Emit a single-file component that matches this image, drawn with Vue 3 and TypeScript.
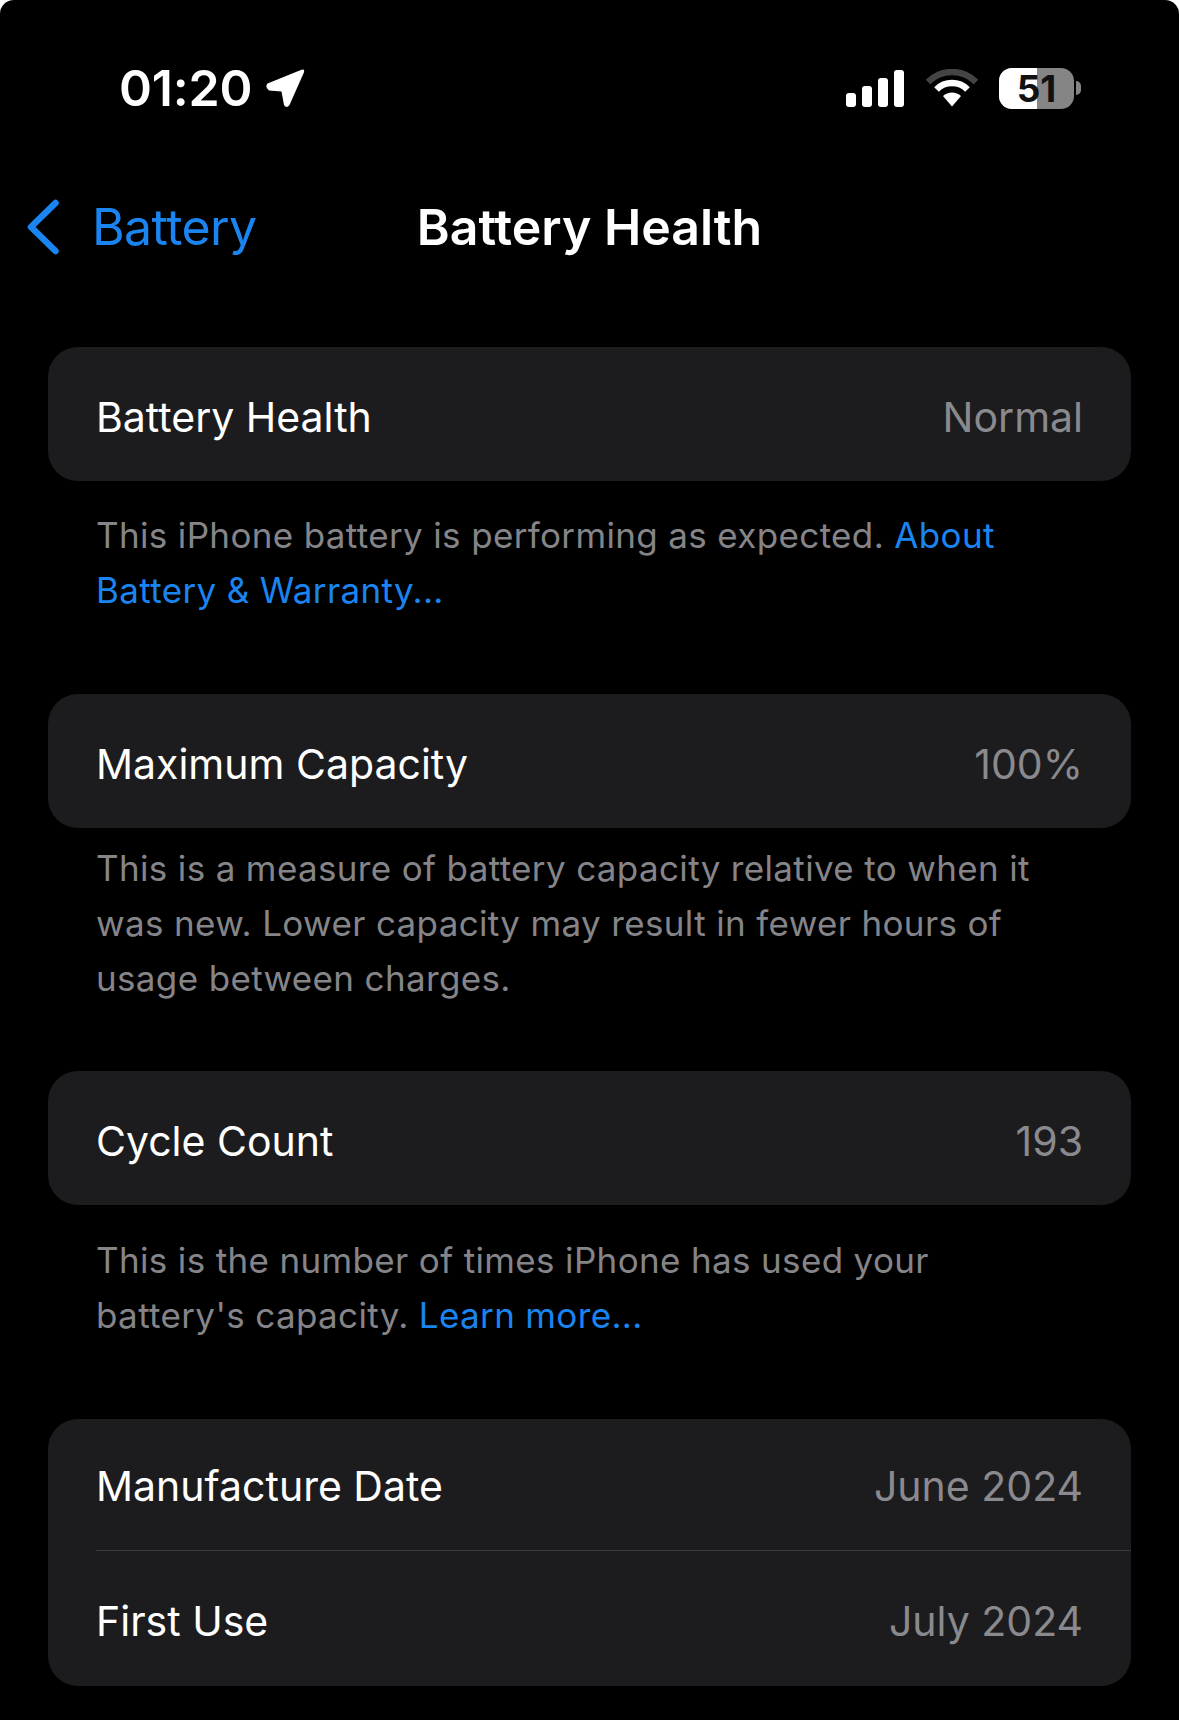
<template>
  <div class="screen">
    <!-- status bar -->
    <div class="status-bar">
      <div class="clock">
        <span class="time">01:20</span>
        <svg class="arrow" viewBox="0 0 39 39" width="39" height="39">
          <path
            d="M1.5 14.5 L35.5 0.8 Q38.8 -0.2 38 3.2 L23.5 36 Q20.5 40 18 36 L15.5 22.5 L3 21.5 Q-1.5 18 1.5 14.5 Z"
            fill="#fff"
          />
        </svg>
      </div>
      <div class="indicators">
        <div class="signal">
          <span v-for="h in signalBars" :key="h" class="bar" :style="{ height: `${h}px` }"></span>
        </div>
        <svg class="wifi" viewBox="0 0 52 38" width="52" height="38">
          <path d="M2 13 A34 34 0 0 1 50 13" fill="none" stroke="#444" stroke-width="6.5" />
          <path d="M10.5 20.5 A22 22 0 0 1 41.5 20.5" fill="none" stroke="#fff" stroke-width="6.5" />
          <path d="M17 27 L26 37.5 L35 27 A13 13 0 0 0 17 27 Z" fill="#fff" />
        </svg>
        <div class="battery">
          <div class="battery-body">
            <div class="battery-fill"></div>
            <span class="battery-text">51</span>
          </div>
          <span class="battery-nub"></span>
        </div>
      </div>
    </div>

    <!-- navigation -->
    <div class="nav">
      <div class="back">
        <svg class="chevron" viewBox="0 0 34 56" width="34" height="56">
          <path
            d="M29.5 4 L5 28 L29.5 52"
            fill="none"
            stroke="#1a85f0"
            stroke-width="6.5"
            stroke-linecap="round"
            stroke-linejoin="round"
          />
        </svg>
        <span class="back-label">Battery</span>
      </div>
      <div class="nav-title">Battery Health</div>
    </div>

    <!-- settings groups -->
    <div v-for="group in groups" :key="group.id" class="group" :class="group.id">
      <div class="card">
        <div v-for="row in group.rows" :key="row.label" class="row">
          <span class="row-label">{{ row.label }}</span>
          <span class="row-value">{{ row.value }}</span>
        </div>
      </div>
      <div v-if="group.note" class="note">
        <div v-for="(line, i) in group.note" :key="i" class="note-line">
          <span
            v-for="part in line"
            :key="part.text"
            :class="{ link: part.link }"
          >{{ part.text }}</span>
        </div>
      </div>
    </div>
  </div>
</template>

<script setup lang="ts">
interface Row {
  label: string
  value: string
}

interface NotePart {
  text: string
  link?: boolean
}

interface Group {
  id: string
  rows: Row[]
  note?: NotePart[][]
}

const signalBars = [14, 21, 29, 37]

const groups: Group[] = [
  {
    id: 'health',
    rows: [{ label: 'Battery Health', value: 'Normal' }],
    note: [
      [
        { text: 'This iPhone battery is performing as expected. ' },
        { text: 'About', link: true },
      ],
      [{ text: 'Battery & Warranty...', link: true }],
    ],
  },
  {
    id: 'capacity',
    rows: [{ label: 'Maximum Capacity', value: '100%' }],
    note: [
      [{ text: 'This is a measure of battery capacity relative to when it' }],
      [{ text: 'was new. Lower capacity may result in fewer hours of' }],
      [{ text: 'usage between charges.' }],
    ],
  },
  {
    id: 'cycles',
    rows: [{ label: 'Cycle Count', value: '193' }],
    note: [
      [{ text: 'This is the number of times iPhone has used your' }],
      [
        { text: "battery's capacity. " },
        { text: 'Learn more...', link: true },
      ],
    ],
  },
  {
    id: 'dates',
    rows: [
      { label: 'Manufacture Date', value: 'June 2024' },
      { label: 'First Use', value: 'July 2024' },
    ],
  },
]
</script>

<style scoped>
.screen {
  width: 1179px;
  height: 1720px;
  overflow: hidden;
  background: #000;
  border-radius: 14px 14px 0 0;
  font-family: Inter, "Liberation Sans", sans-serif;
  color: #fff;
  display: flex;
  flex-direction: column;
}

.status-bar {
  height: 120px;
  padding: 60px 98px 0 119px;
  display: flex;
  justify-content: space-between;
  box-sizing: border-box;
}
.clock {
  display: flex;
  align-items: center;
  height: 56px;
  gap: 14px;
}
.time {
  font-size: 50px;
  font-weight: 600;
  letter-spacing: -0.2px;
}
.indicators {
  display: flex;
  align-items: center;
  height: 56px;
}
.signal {
  display: flex;
  align-items: flex-end;
  gap: 6px;
  margin-right: 22px;
}
.bar {
  width: 10px;
  background: #fff;
  border-radius: 3px;
}
.wifi {
  margin-right: 21px;
}
.battery {
  display: flex;
  align-items: center;
  gap: 2px;
}
.battery-body {
  position: relative;
  width: 75px;
  height: 41px;
  background: #858585;
  border-radius: 13px;
}
.battery-fill {
  width: 38px;
  height: 100%;
  background: #fff;
  border-radius: 13px 0 0 13px;
}
.battery-text {
  position: absolute;
  inset: 0;
  display: flex;
  align-items: center;
  justify-content: center;
  font-size: 37px;
  line-height: 1;
  font-weight: 700;
  color: #111;
}
.battery-nub {
  width: 5px;
  height: 14px;
  background: #858585;
  border-radius: 0 5px 5px 0;
}

.nav {
  position: relative;
  height: 110px;
  margin-top: 52px;
  display: flex;
  align-items: center;
  justify-content: center;
}
.back {
  position: absolute;
  left: 26px;
  top: 0;
  bottom: 0;
  display: flex;
  align-items: center;
  gap: 32px;
  color: #1a85f0;
}
.back-label {
  font-size: 50px;
  letter-spacing: -0.6px;
}
.nav-title {
  font-size: 50px;
  font-weight: 600;
}

.group {
  margin: 0 48px;
}
.health {
  margin-top: 65px;
}
.capacity {
  margin-top: 76px;
}
.cycles {
  margin-top: 65px;
}
.dates {
  margin-top: 76px;
}
.card {
  background: #1c1c1e;
  border-radius: 30px;
}
.row {
  height: 134px;
  box-sizing: border-box;
  padding: 6px 48px 0;
  display: flex;
  justify-content: space-between;
  align-items: center;
  font-size: 41px;
  position: relative;
}
.dates .row:first-child {
  height: 131px;
  padding-top: 3px;
}
.row + .row {
  height: 136px;
}
.row + .row::before {
  content: "";
  position: absolute;
  left: 48px;
  right: 0;
  top: 0;
  height: 1px;
  background: #3a3a3c;
}
.row-value {
  color: #8a8a8e;
}

.note {
  padding: 0 48px;
  font-size: 35px;
  line-height: 55px;
  letter-spacing: 0.35px;
  color: #858589;
  white-space: nowrap;
}
.health .note {
  margin-top: 27px;
}
.capacity .note {
  margin-top: 13px;
}
.cycles .note {
  margin-top: 28px;
}
.link {
  color: #1a85f0;
}
</style>

<style>
html,
body {
  background: #fff;
}
</style>
